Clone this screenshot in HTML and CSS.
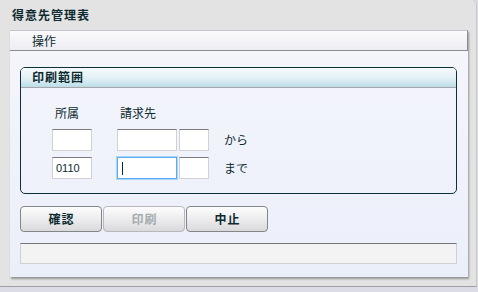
FILE: index.html
```html
<!DOCTYPE html>
<html lang="ja">
<head>
<meta charset="utf-8">
<title>得意先管理表</title>
<link rel="stylesheet" href="styles.css">
</head>
<body>
<div class="window">
  <div class="title">得意先管理表</div>
  <div class="panel">
    <div class="menubar"><span class="menu-item">操作</span></div>
    <div class="group">
      <div class="group-head">印刷範囲</div>
      <div class="group-body">
        <div class="labels">
          <div class="lbl lbl-dept">所属</div>
          <div class="lbl">請求先</div>
        </div>
        <div class="row">
          <div class="inp w40"></div>
          <div class="inp w60 gap25"></div>
          <div class="inp w30 gap2"></div>
          <div class="txt">から</div>
        </div>
        <div class="row">
          <div class="inp w40">0110</div>
          <div class="inp w60 gap25 focus"><span class="caret"></span></div>
          <div class="inp w30 gap2"></div>
          <div class="txt">まで</div>
        </div>
      </div>
    </div>
    <div class="buttons">
      <div class="btn">確認</div>
      <div class="btn disabled">印刷</div>
      <div class="btn">中止</div>
    </div>
    <div class="status"></div>
  </div>
</div>
</body>
</html>
```
FILE: styles.css
```css
html, body {
  margin: 0;
  padding: 0;
}
body {
  width: 478px;
  height: 292px;
  background: #dcdde4;
  font-family: "Noto Sans CJK JP", "DejaVu Sans", sans-serif;
  font-size: 12px;
  color: #0c2a30;
  overflow: hidden;
}
.window {
  width: 477px;
  height: 287px;
  background: #e3e3e3;
  border-right: 1px solid #c9c9cc;
  border-bottom: 1px solid #9c9ea8;
  border-top-right-radius: 5px;
  box-sizing: border-box;
}
.title {
  height: 30px;
  line-height: 30px;
  padding-left: 12px;
  font-weight: bold;
  font-size: 12px;
  letter-spacing: 1px;
}
.panel {
  margin-left: 10px;
  width: 458px;
  height: 247px;
  background: linear-gradient(#f5f6fb, #ebeffa);
  box-shadow: 1px 2px 2px rgba(0, 0, 0, 0.35);
  display: flex;
  flex-direction: column;
}
.menubar {
  display: flex;
  align-items: center;
  height: 21px;
  box-sizing: border-box;
  border-top: 1px solid #c4c4cc;
  border-bottom: 1px solid #8c8c90;
  border-right: 1px solid #8c8c90;
  background: linear-gradient(#fbfbfd, #ececf2);
}
.menu-item {
  margin-left: 22px;
}
.group {
  margin: 16px 0 0 10px;
  width: 437px;
  height: 127px;
  box-sizing: border-box;
  border: 1px solid #0d3038;
  border-radius: 5px;
  overflow: hidden;
}
.group-head {
  height: 19px;
  line-height: 18px;
  padding-left: 11px;
  font-weight: bold;
  letter-spacing: 1px;
  background: linear-gradient(#f6fafc, #e2f0f5 55%, #bcdde7);
  border-bottom: 1px solid #a6a6aa;
}
.group-body {
  display: flex;
  flex-direction: column;
  gap: 6px;
  padding: 17px 0 0 31px;
}
.labels {
  display: flex;
  height: 16px;
  line-height: 16px;
  margin-bottom: 2px;
}
.lbl {
  padding-left: 3px;
}
.lbl-dept {
  width: 62px;
}
.row {
  display: flex;
  height: 22px;
}
.inp {
  box-sizing: border-box;
  height: 22px;
  background: #ffffff;
  border: 1px solid #d2d2d6;
  border-top-color: #7a7a7e;
  font-family: "Liberation Sans", "DejaVu Sans", sans-serif;
  font-size: 11px;
  line-height: 20px;
  padding-left: 3px;
  color: #0c2a30;
  position: relative;
}
.w40 { width: 40px; }
.w60 { width: 60px; }
.w30 { width: 30px; }
.gap25 { margin-left: 25px; }
.gap2 { margin-left: 2px; }
.inp.focus {
  border: 1px solid #5aaef0;
  box-shadow: 0 0 0 1px #a8d6fa;
}
.caret {
  position: absolute;
  left: 4px;
  top: 4px;
  width: 1px;
  height: 13px;
  background: #0c2a30;
}
.txt {
  line-height: 22px;
  padding-left: 15px;
}
.buttons {
  display: flex;
  gap: 1px;
  margin: 12px 0 0 10px;
}
.btn {
  width: 82px;
  height: 26px;
  box-sizing: border-box;
  border: 1px solid #85868a;
  border-radius: 4px;
  background: linear-gradient(#fdfdfd, #e9e9eb 60%, #d9d9dc);
  text-align: center;
  line-height: 24px;
  font-weight: bold;
  letter-spacing: 1px;
  text-indent: 1px;
}
.btn.disabled {
  color: #a4acae;
  border-color: #b8b8bc;
}
.status {
  margin: 11px 0 0 10px;
  width: 437px;
  height: 21px;
  box-sizing: border-box;
  background: #f3f3f3;
  border: 1px solid #d0d0d2;
  border-top-color: #76767a;
}
```
